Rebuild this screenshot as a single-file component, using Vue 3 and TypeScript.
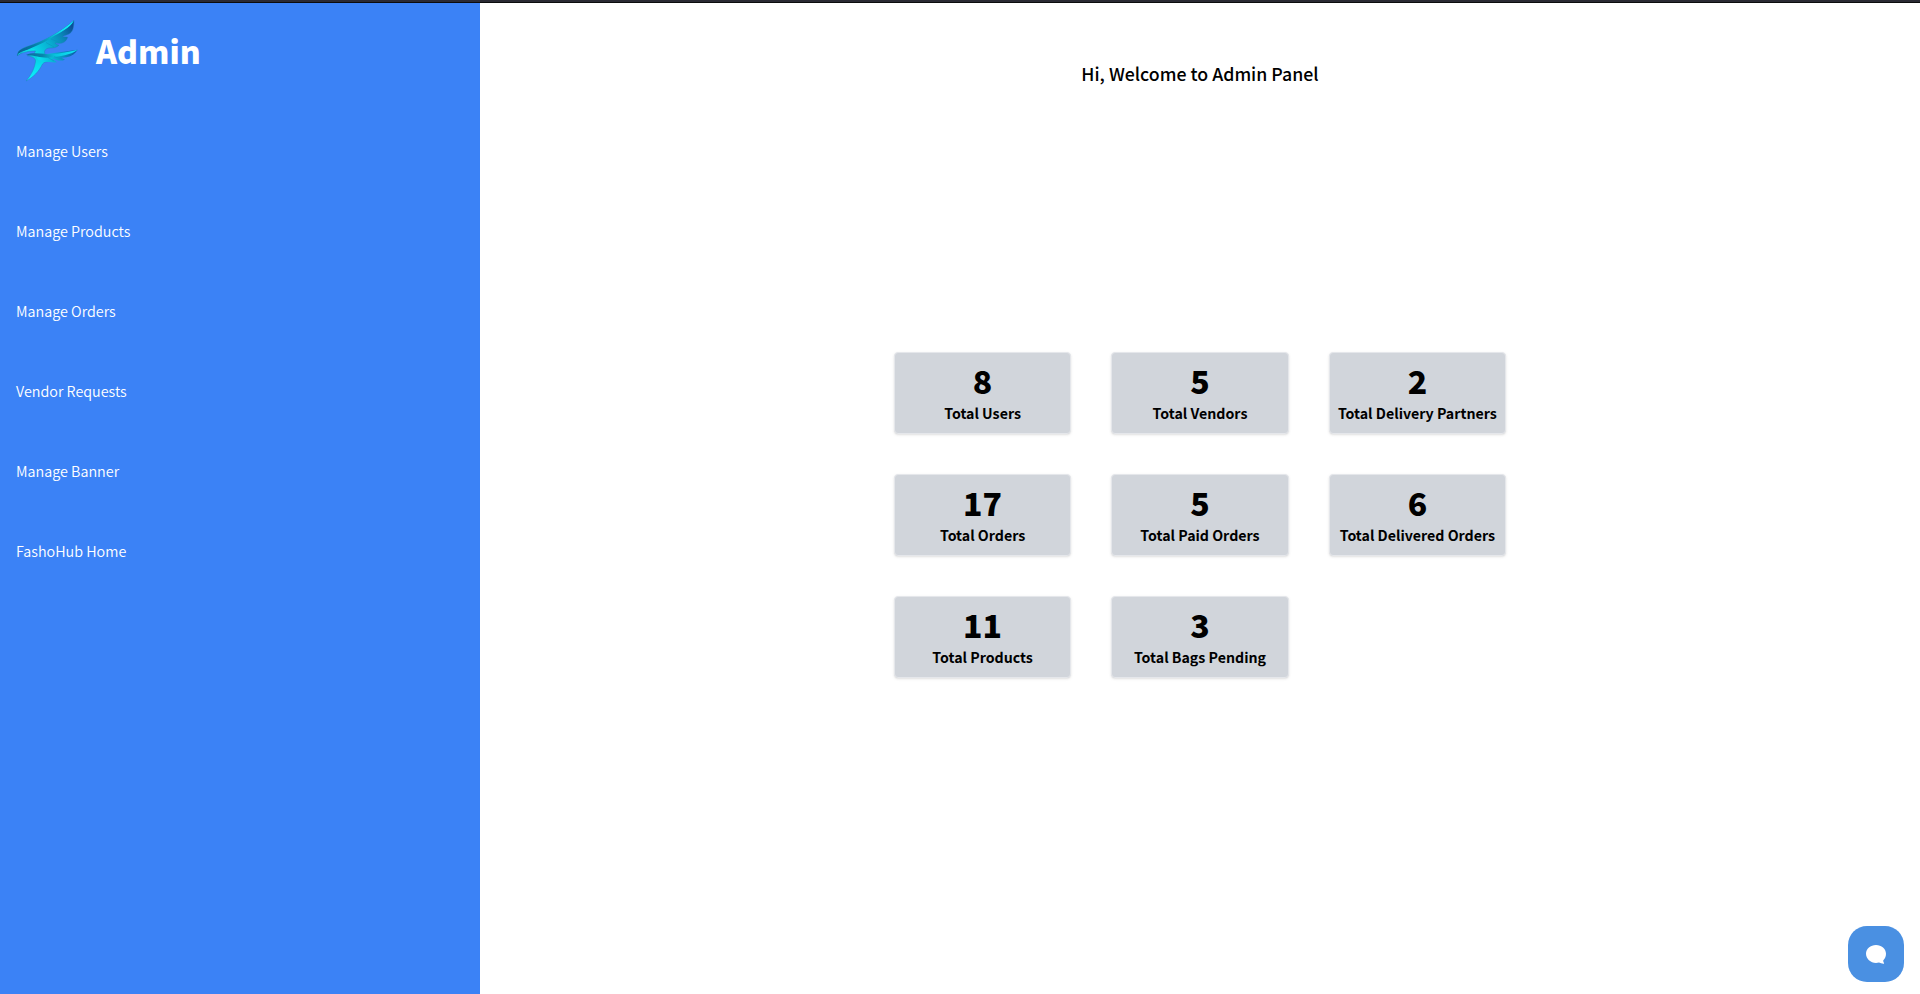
<script setup lang="ts">
interface Stat {
  value: number
  label: string
}

const links: string[] = [
  'Manage Users',
  'Manage Products',
  'Manage Orders',
  'Vendor Requests',
  'Manage Banner',
  'FashoHub Home',
]

const stats: Stat[] = [
  { value: 8, label: 'Total Users' },
  { value: 5, label: 'Total Vendors' },
  { value: 2, label: 'Total Delivery Partners' },
  { value: 17, label: 'Total Orders' },
  { value: 5, label: 'Total Paid Orders' },
  { value: 6, label: 'Total Delivered Orders' },
  { value: 11, label: 'Total Products' },
  { value: 3, label: 'Total Bags Pending' },
]
</script>

<template>
  <div class="page">
    <div class="topline"></div>
    <div class="layout">
      <aside class="sidebar">
        <div class="brand">
          <svg class="logo" viewBox="0 0 64 64" aria-hidden="true">
            <defs>
              <linearGradient id="wing" gradientUnits="userSpaceOnUse" x1="18" y1="36" x2="57" y2="12">
                <stop offset="0" stop-color="#08d8e8" />
                <stop offset="0.4" stop-color="#08acd0" />
                <stop offset="0.7" stop-color="#0a86b8" />
                <stop offset="1" stop-color="#0b4f98" />
              </linearGradient>
              <linearGradient id="edge" gradientUnits="userSpaceOnUse" x1="2" y1="38" x2="58" y2="5">
                <stop offset="0" stop-color="#0a5f98" />
                <stop offset="0.25" stop-color="#0874a4" />
                <stop offset="0.5" stop-color="#08a0c2" />
                <stop offset="0.75" stop-color="#10e0f0" />
                <stop offset="1" stop-color="#10f4ff" />
              </linearGradient>
              <linearGradient id="lower" gradientUnits="userSpaceOnUse" x1="11" y1="40" x2="62" y2="34">
                <stop offset="0" stop-color="#0a6fa0" />
                <stop offset="0.3" stop-color="#0884ac" />
                <stop offset="0.55" stop-color="#08c4dc" />
                <stop offset="1" stop-color="#10e8f8" />
              </linearGradient>
              <linearGradient id="feather" gradientUnits="userSpaceOnUse" x1="24" y1="42" x2="60" y2="37">
                <stop offset="0" stop-color="#08dcec" />
                <stop offset="0.5" stop-color="#08a4cc" />
                <stop offset="1" stop-color="#0b5ca4" />
              </linearGradient>
              <linearGradient id="tail" x1="0" y1="0" x2="0" y2="1">
                <stop offset="0" stop-color="#08c8dc" />
                <stop offset="0.4" stop-color="#08dcec" />
                <stop offset="1" stop-color="#10f0ff" />
              </linearGradient>
            </defs>
            <path fill="url(#wing)" stroke="#1c78b4" stroke-width="0.4" d="M1.3 39.7C1.5 37 2.3 35.5 3.5 34.5C6 32.5 8.5 31.5 10.7 30.7C28 25.5 44 16.5 58 4.3C58 10 57 15 54.7 16.7C52.5 18.5 50 19 46.5 20.5C48.5 21.3 50 20.7 51.7 21.3C50.5 24 49.5 26 46 27C43.5 27.8 41.5 27 39 27C40.5 28.5 41.5 29 43 29.2C40.5 31.7 37.5 32 34 32C31 32 29 33.5 28.5 35.5L29 38L18 38L19.5 35C11 35 5.5 36.5 1.3 39.7Z" />
            <path fill="url(#edge)" d="M1.3 39.7C1.5 37 2.3 35.5 3.5 34.5C6 32.5 8.5 31.5 10.7 30.7C28 25.5 44 16.5 58 4.3C54 13 44 16 35 22C26 28.5 12 32 1.3 39.7Z" />
            <path fill="none" stroke="#12dcea" stroke-width="0.9" d="M2 38.5C6 35.3 12 34 18.5 33.5" />
            <path fill="url(#tail)" stroke="#1c78b4" stroke-width="0.4" d="M19 38L29 39L34 45.5C31 45.5 28 46 26.5 48C23 55.5 17 61.5 10 65C15.5 59 19 51 19.5 45C19.5 42 16 40.5 11.3 39.7Z" />
            <path fill="url(#feather)" d="M20 39.5L61.7 33.7C59.5 37.5 56 40 50.5 41.3L45.5 41.8L49 43.7C45.5 45 42 44.8 38 43L36.5 43L41 46.3C36 46.7 32 45.5 29 45.5L22 44Z" />
            <path fill="url(#lower)" d="M10 39C18 35.5 26 38.8 34 38.3C44 37.7 53 35.5 61.7 33.7C54 39.5 44 40 34 41.5C26 42.5 20 39.5 10 39Z" />
            <path fill="none" stroke="#0890bc" stroke-width="0.5" d="M30 26.5L38 31M35 23L43.5 26.5M32 41.5L38 45M38 40.7L46 43" />
          </svg>
          <h1 class="brand-name">Admin</h1>
        </div>
        <nav class="nav">
          <a v-for="link in links" :key="link" class="nav-link">{{ link }}</a>
        </nav>
      </aside>
      <main class="main">
        <h2 class="welcome">Hi, Welcome to Admin Panel</h2>
        <section class="stats">
          <article v-for="stat in stats" :key="stat.label" class="card">
            <span class="value">{{ stat.value }}</span>
            <span class="label">{{ stat.label }}</span>
          </article>
        </section>
      </main>
    </div>
    <button class="chat" type="button" aria-label="Open chat">
      <svg viewBox="0 0 20 20" width="20" height="20" aria-hidden="true">
        <path fill="#fff" d="M10 1C15.5 1 20 4.8 20 9.8C20 12.5 18.9 14.8 17.3 16.3C17.2 17.5 17.4 18.2 18 18.9C18.3 19.4 18 19.7 17.5 19.7C15.8 19.7 14.3 19.3 13 18.6C12 18.8 11 18.9 10 18.9C4.5 18.9 0 14.8 0 9.8C0 4.8 4.5 1 10 1Z" />
      </svg>
    </button>
  </div>
</template>

<style>
body {
  margin: 0;
  background: #fff;
}
</style>

<style scoped>
.page {
  height: 994px;
  display: flex;
  flex-direction: column;
  overflow: hidden;
  color: #000;
  font-family: 'Noto Sans CJK SC', 'Noto Sans', sans-serif;
  font-size: 14.2px;
  line-height: 24px;
}

.topline {
  box-sizing: border-box;
  height: 3px;
  flex: none;
  background: #2b2a33;
  border-bottom: 1px solid #0c0c0d;
}

.layout {
  display: flex;
  flex: 1;
}

.sidebar {
  box-sizing: border-box;
  width: 480px;
  padding: 13px 16px;
  background: #3b82f6;
  color: #fff;
}

.brand {
  display: flex;
  align-items: center;
  gap: 16px;
  height: 64px;
}

.logo {
  width: 64px;
  height: 64px;
  overflow: visible;
}

.brand-name {
  margin: 3px 0 0;
  font-size: 31.9px;
  line-height: 40px;
  font-weight: 900;
}

.nav {
  display: flex;
  flex-direction: column;
  gap: 56px;
  margin-top: 59px;
}

.nav-link {
  font-size: 14.35px;
  font-weight: 350;
}

.main {
  flex: 1;
  display: flex;
  flex-direction: column;
  align-items: center;
}

.welcome {
  margin: 56px 0 0;
  font-size: 17.75px;
  line-height: 28px;
  font-weight: 500;
}

.stats {
  display: grid;
  grid-template-columns: repeat(3, 177.4px);
  gap: 40px;
  margin-top: 265px;
}

.card {
  box-sizing: border-box;
  height: 82px;
  padding: 8px;
  display: flex;
  flex-direction: column;
  align-items: center;
  border: 1px solid #e5e7eb;
  border-radius: 4px;
  background: #d1d5db;
  box-shadow: 0 1px 3px rgba(0, 0, 0, 0.1), 0 1px 2px -1px rgba(0, 0, 0, 0.1);
  white-space: nowrap;
}

.value {
  margin-bottom: 1px;
  font-size: 32px;
  line-height: 39px;
  font-weight: 900;
}

.label {
  font-weight: 700;
}

.chat {
  position: fixed;
  right: 16px;
  bottom: 12px;
  width: 56px;
  height: 56px;
  display: flex;
  align-items: center;
  justify-content: center;
  padding: 0;
  border: 0;
  border-radius: 19px;
  background: #4a90e2;
}
</style>
